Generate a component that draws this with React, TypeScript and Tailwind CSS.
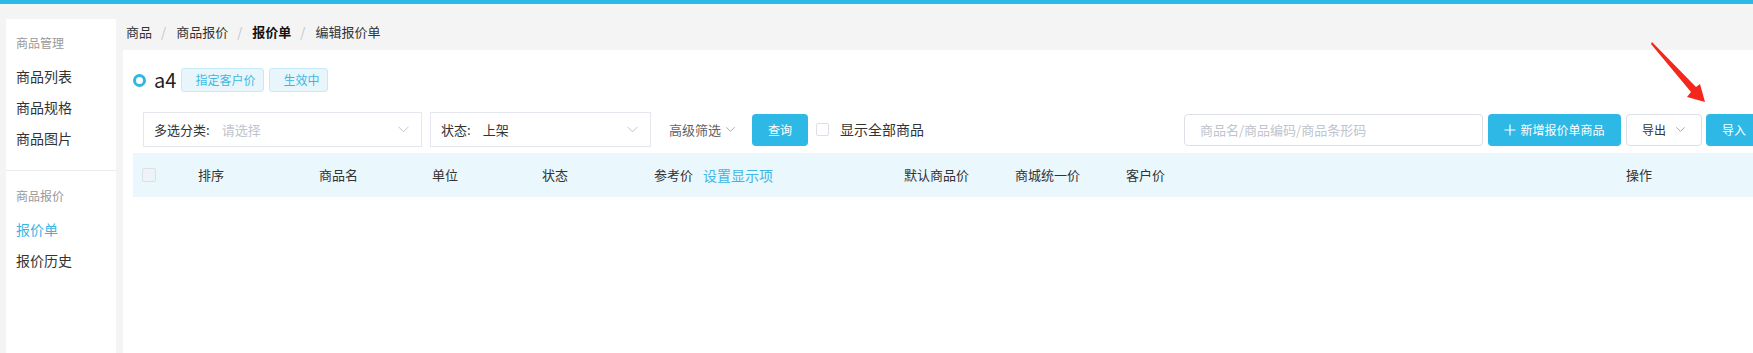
import React from 'react';

const menuGroups = [
    { title: '商品管理', items: ['商品列表', '商品规格', '商品图片'] },
    { title: '商品报价', items: ['报价单', '报价历史'] },
];

const crumbs = ['商品', '商品报价', '报价单', '编辑报价单'];

const Chevron = ({ className = '' }: { className?: string }) => (
    <svg width="11" height="7" viewBox="0 0 11 7" className={className}>
        <polyline points="0.5,0.8 5.5,5.8 10.5,0.8" fill="none" stroke="currentColor" strokeWidth="1" />
    </svg>
);

const Sidebar = () => (
    <aside className="mt-[15px] ml-[6px] w-[110px] shrink-0 bg-white">
        {menuGroups.map((group, gi) => (
            <div key={group.title}>
                {gi > 0 && <div className="h-px bg-[#ebebeb]" />}
                <div className={`px-[10px] ${gi === 0 ? 'pt-[14px] pb-[16px]' : 'pt-[15px]'}`}>
                    <div className="h-[20px] leading-[20px] text-[12px] text-[#999]">{group.title}</div>
                    <ul className="mt-[8px]">
                        {group.items.map(item => (
                            <li key={item} className={`h-[31px] leading-[31px] text-[14px] ${item === '报价单' ? 'text-[#3db5e2]' : 'text-[#333]'}`}>{item}</li>
                        ))}
                    </ul>
                </div>
            </div>
        ))}
    </aside>
);

const Breadcrumb = () => (
    <div className="h-[46px] pt-[19px] pl-[3px] flex items-start text-[13px] leading-[18px]">
        {crumbs.map((c, i) => (
            <React.Fragment key={c}>
                {i > 0 && <span className="ml-[9px] mr-[10px] text-[#c0c4cc]">/</span>}
                <span className={c === '报价单' ? 'font-bold text-[#111]' : 'text-[#333]'}>{c}</span>
            </React.Fragment>
        ))}
    </div>
);

const Tag = ({ children }: { children: React.ReactNode }) => (
    <span className="h-[24px] leading-[22px] rounded-[3px] border border-[#c5e9f7] bg-[#e8f6fc] pl-[13px] pr-[8px] text-[12px] text-[#3fb6e2]">{children}</span>
);

const FilterRow = () => (
    <div className="mt-[20px] h-[35px] pl-[20px] pr-[13px] flex items-center justify-between">
        <div className="flex items-center">
            <div className="w-[279px] h-[35px] border border-[#e4e7ed] flex items-center pl-[10px] pr-[12px] text-[13px]">
                <span className="text-[#333]">多选分类:</span>
                <span className="ml-[12px] text-[#c0c4cc]">请选择</span>
                <Chevron className="ml-auto text-[#c0c4cc]" />
            </div>
            <div className="ml-[8px] w-[221px] h-[35px] border border-[#e4e7ed] flex items-center pl-[10px] pr-[12px] text-[13px]">
                <span className="text-[#333]">状态:</span>
                <span className="ml-[12px] text-[#333]">上架</span>
                <Chevron className="ml-auto text-[#c0c4cc]" />
            </div>
            <div className="ml-[18px] flex items-center text-[13px] text-[#606266]">
                高级筛选
                <Chevron className="ml-[5px] w-[9px] text-[#909399]" />
            </div>
            <button className="ml-[17px] w-[56px] h-[32px] rounded-[4px] bg-[#2db8e5] text-[12px] text-white">查询</button>
            <span className="ml-[8px] w-[13px] h-[13px] rounded-[2px] border border-[#dcdfe6] bg-white" />
            <span className="ml-[11px] text-[14px] text-[#333]">显示全部商品</span>
        </div>
        <div className="flex items-center">
            <input
                readOnly
                placeholder="商品名/商品编码/商品条形码"
                className="w-[299px] h-[32px] rounded-[4px] border border-[#dcdfe6] pl-[15px] text-[13px] outline-none placeholder:text-[#c0c4cc]"
            />
            <button className="ml-[5px] w-[133px] h-[32px] rounded-[4px] bg-[#2db8e5] text-[12px] text-white flex items-center justify-center gap-[4px]">
                <svg width="12" height="12" viewBox="0 0 12 12">
                    <path d="M6 0.5v11M0.5 6h11" stroke="currentColor" strokeWidth="1.2" fill="none" />
                </svg>
                新增报价单商品
            </button>
            <button className="ml-[5px] w-[76px] h-[32px] rounded-[4px] border border-[#dcdfe6] bg-white pl-[15px] flex items-center text-[12px] text-[#333]">
                导出
                <Chevron className="ml-[10px] w-[9px] text-[#909399]" />
            </button>
            <button className="ml-[4px] w-[56px] h-[32px] rounded-[4px] bg-[#2db8e5] text-[12px] text-white">导入</button>
        </div>
    </div>
);

const TableHeader = () => (
    <div className="mt-[6px] mx-[10px] h-[44px] bg-[#eaf7fd] flex items-center text-[13px] text-[#333]">
        <div className="w-[65px] pl-[9px] flex items-center">
            <span className="w-[14px] h-[14px] rounded-[2px] border border-[#dcdfe6] bg-[#eef2f9]" />
        </div>
        <div className="w-[121px]">排序</div>
        <div className="w-[113px]">商品名</div>
        <div className="w-[110px]">单位</div>
        <div className="w-[112px]">状态</div>
        <div className="w-[250px] flex items-center">
            参考价
            <span className="ml-[10px] text-[14px] text-[#3fb6e2]">设置显示项</span>
        </div>
        <div className="w-[111px]">默认商品价</div>
        <div className="w-[111px]">商城统一价</div>
        <div className="w-[500px]">客户价</div>
        <div>操作</div>
    </div>
);

const Arrow = () => (
    <svg className="absolute left-[1640px] top-[36px]" width="75" height="75" viewBox="0 0 75 75">
        <polygon points="12,6 56,51 60,48 65,66 47,61 51,56 11,8" fill="#f5261c" />
    </svg>
);

export default function App() {
    return (
        <div className="relative w-[1753px] h-[353px] overflow-hidden bg-[#f4f4f4] font-['Noto_Sans_CJK_SC','Liberation_Sans',sans-serif] text-[#333]">
            <div className="h-[4px] bg-[#2db8e5]" />
            <div className="flex w-[1775px] h-[349px]">
                <Sidebar />
                <main className="ml-[7px] flex-1 flex flex-col">
                    <Breadcrumb />
                    <div className="flex-1 bg-white pt-[18px]">
                        <div className="h-[24px] pl-[10px] flex items-center">
                            <span className="w-[13px] h-[13px] rounded-full border-[3px] border-[#2db8e5]" />
                            <span className="ml-[8px] text-[20px] leading-[24px] text-[#222]">a4</span>
                            <div className="ml-[5px] flex items-center gap-[5px]">
                                <Tag>指定客户价</Tag>
                                <Tag>生效中</Tag>
                            </div>
                        </div>
                        <FilterRow />
                        <TableHeader />
                    </div>
                </main>
            </div>
            <Arrow />
        </div>
    );
}
